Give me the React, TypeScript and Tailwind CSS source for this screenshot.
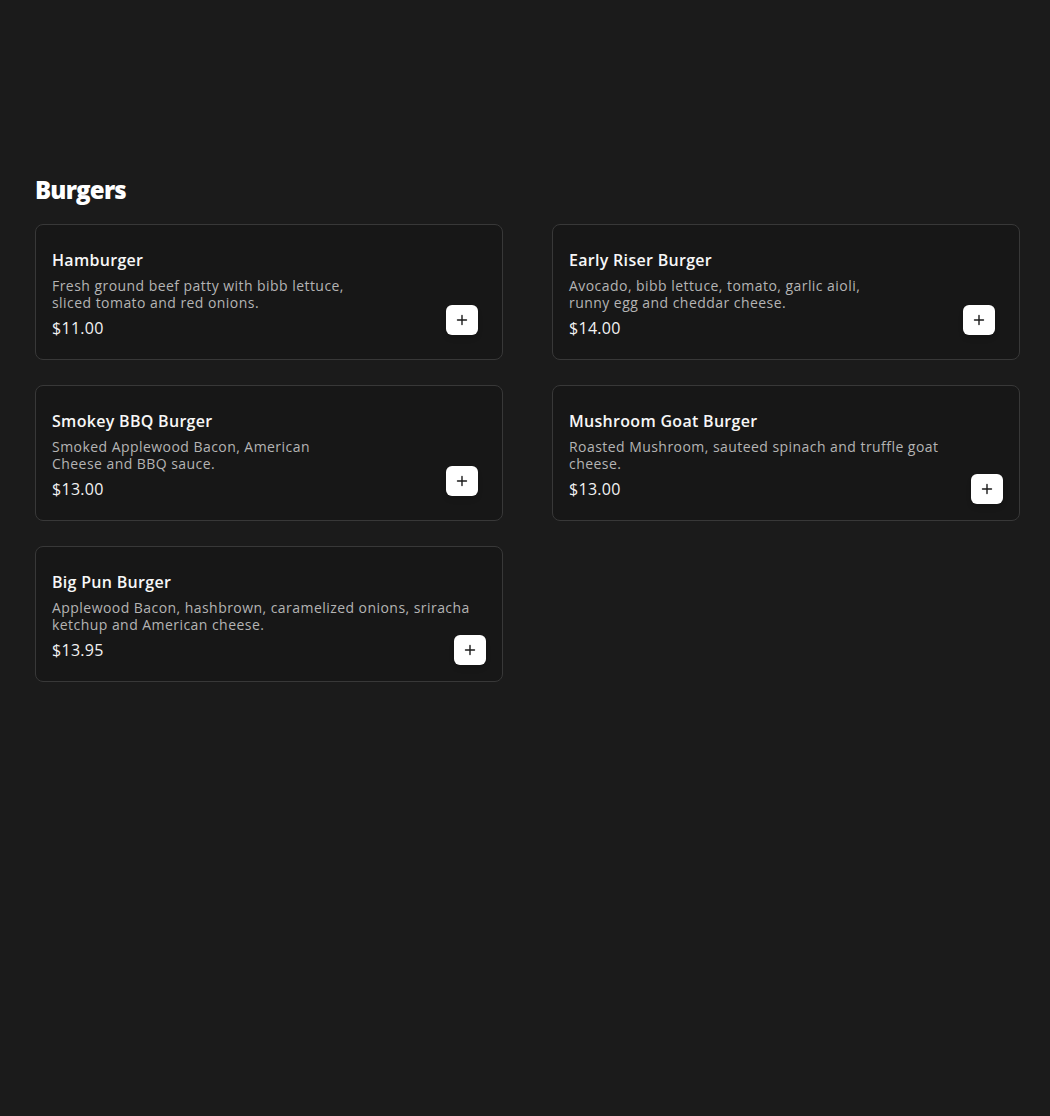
import React from "react";

type Item = {
  name: string;
  lines: string[];
  price: string;
  inset?: boolean;
};

const items: Item[] = [
  {
    name: "Hamburger",
    lines: ["Fresh ground beef patty with bibb lettuce,", "sliced tomato and red onions."],
    price: "$11.00",
    inset: true,
  },
  {
    name: "Early Riser Burger",
    lines: ["Avocado, bibb lettuce, tomato, garlic aioli,", "runny egg and cheddar cheese."],
    price: "$14.00",
    inset: true,
  },
  {
    name: "Smokey BBQ Burger",
    lines: ["Smoked Applewood Bacon, American", "Cheese and BBQ sauce."],
    price: "$13.00",
    inset: true,
  },
  {
    name: "Mushroom Goat Burger",
    lines: ["Roasted Mushroom, sauteed spinach and truffle goat", "cheese."],
    price: "$13.00",
  },
  {
    name: "Big Pun Burger",
    lines: ["Applewood Bacon, hashbrown, caramelized onions, sriracha", "ketchup and American cheese."],
    price: "$13.95",
  },
];

function PlusIcon() {
  return (
    <svg width="12" height="12" viewBox="0 0 12 12" fill="none">
      <path d="M6 1.5v9M1.5 6h9" stroke="#1a1a1a" strokeWidth="1.4" strokeLinecap="round" />
    </svg>
  );
}

function MenuCard({ item }: { item: Item }) {
  return (
    <div className="flex items-end justify-between rounded-lg border border-[#383838] bg-[#171717] px-4 pb-4">
      <div className="min-w-0 flex-1 pt-[23px] pb-[3px]">
        <h3 className="text-base font-semibold leading-6 tracking-[0.3px] text-[#f7f7f7]">{item.name}</h3>
        <p className="mt-[5px] text-sm leading-[17px] tracking-[0.45px] text-[#b4b4b4]">
          {item.lines.map((l, i) => (
            <span key={i} className="block whitespace-nowrap">
              {l}
            </span>
          ))}
        </p>
        <div className="mt-[5px] text-base leading-6 tracking-[0.3px] text-[#f2f2f2]">{item.price}</div>
      </div>
      <button
        className={`flex h-[30px] w-8 shrink-0 items-center justify-center rounded-md bg-white shadow-md ${
          item.inset ? "mb-2 mr-2" : ""
        }`}
      >
        <PlusIcon />
      </button>
    </div>
  );
}

export default function App() {
  return (
    <div
      className="min-h-[1116px] bg-[#1b1b1b] pl-[35px] pr-[30px] pt-[174px]"
      style={{ fontFamily: '"Open Sans", "Liberation Sans", sans-serif' }}
    >
      <h2 className="text-2xl font-extrabold leading-8 tracking-[-0.8px] text-white">Burgers</h2>
      <div className="mt-[18px] grid grid-cols-2 gap-x-[49px] gap-y-[25px]">
        {items.map((item) => (
          <MenuCard key={item.name} item={item} />
        ))}
      </div>
    </div>
  );
}
